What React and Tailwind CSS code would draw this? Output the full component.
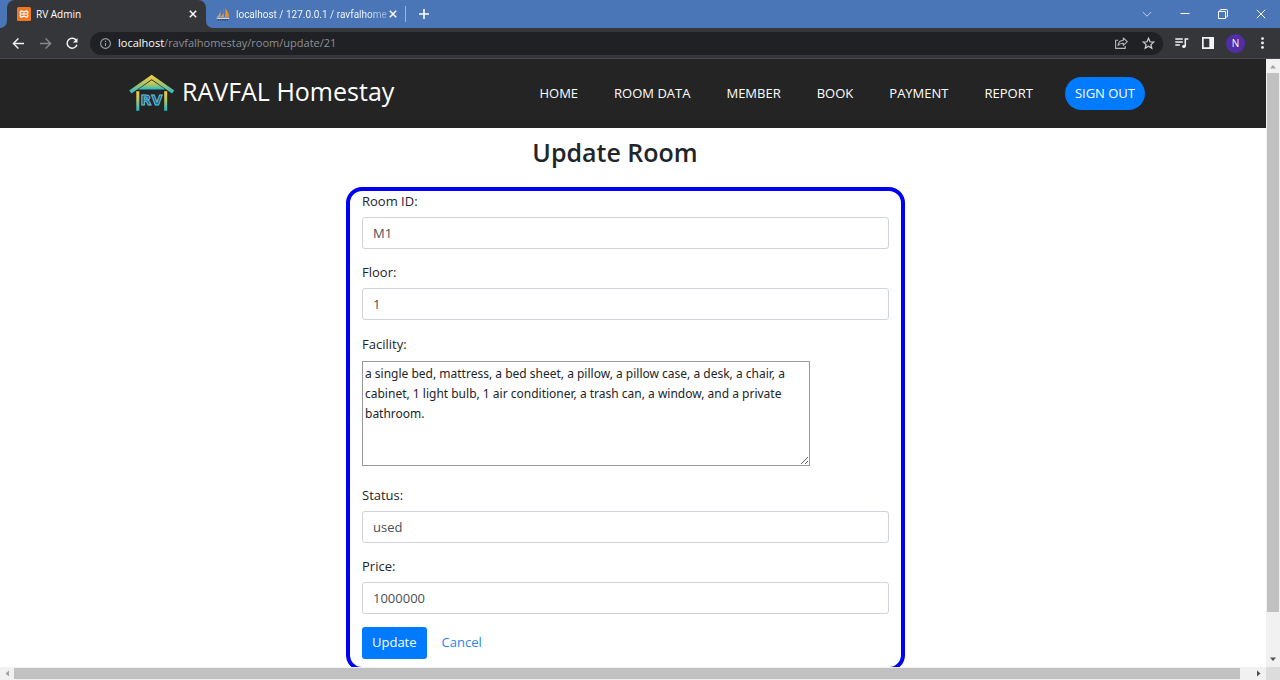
import React from "react";

function XamppIcon() {
  return (
    <svg className="size-3.5 shrink-0" viewBox="0 0 14 14" aria-hidden="true">
      <rect width="14" height="14" rx="1.5" fill="#f37623" />
      <path
        d="M4.600 3.900a1.500 1.500 0 0 0-1 2.500L4.200 7l-.6.6a1.500 1.500 0 0 0 1 2.500c1.200 0 1.300-1 2.400-1s1.200 1 2.400 1a1.500 1.500 0 0 0 1-2.500L9.800 7l.6-.6a1.500 1.500 0 0 0-1-2.500C8.200 3.900 8.100 4.900 7 4.900S5.800 3.900 4.600 3.900ZM5.300 7h3.400"
        fill="none"
        stroke="#fff"
        strokeWidth="1.3"
        strokeLinejoin="round"
      />
    </svg>
  );
}

function SailIcon() {
  return (
    <svg className="size-3.5 shrink-0" viewBox="0 0 14 14" aria-hidden="true">
      <path d="M4.6 2.5C4.5 5.5 3 8.3.6 10.2l3.9-.2Z" fill="#b7a48c" />
      <path d="M6.8.5C8.100 4 7.500 7.300 4.900 10.100h3Z" fill="#f5a02c" />
      <path d="M9 1c2.500 2.200 3.800 5.400 4 8.700l-4.200.4C9.600 7 9.700 4 9 1Z" fill="#f28c1b" />
      <path d="M.8 11.300h12.400" stroke="#dfe3ea" strokeWidth="1.2" />
      <path d="M1.500 12.800h11" stroke="#39415c" strokeWidth="1.4" strokeDasharray="1.5 .8" />
    </svg>
  );
}

function CloseIcon() {
  return (
    <svg className="size-2" viewBox="0 0 8 8" aria-hidden="true">
      <path d="m.8.8 6.400 6.400M7.200.8.8 7.200" stroke="#fff" strokeWidth="1.5" />
    </svg>
  );
}

function TabStrip() {
  return (
    <div className="flex h-7 shrink-0 items-center bg-[#4a76b8] pl-[7px] text-[10px] text-white">
      <div className="relative flex h-full w-[199px] items-center rounded-t-lg bg-[#35363a] pr-[9px] pl-2.5">
        <svg className="absolute bottom-0 -left-[7px] h-[7px] w-[7px]" viewBox="0 0 7 7" aria-hidden="true">
          <path d="M7 0v7H0a7 7 0 0 0 7-7Z" fill="#35363a" />
        </svg>
        <svg className="absolute -right-[7px] bottom-0 h-[7px] w-[7px]" viewBox="0 0 7 7" aria-hidden="true">
          <path d="M0 0v7h7a7 7 0 0 1-7-7Z" fill="#35363a" />
        </svg>
        <XamppIcon />
        <span className="ml-[5px] flex-1">RV Admin</span>
        <button type="button" aria-label="Close RV Admin"><CloseIcon /></button>
      </div>
      <div className="flex h-full w-[199px] items-center pr-2 pl-2.5">
        <SailIcon />
        <span className="ml-1.5 flex-1 bg-linear-to-r from-white from-85% to-white/30 bg-clip-text font-['Roboto',sans-serif] whitespace-nowrap text-transparent">
          localhost / 127.0.0.1 / ravfalhome
        </span>
        <button type="button" aria-label="Close phpMyAdmin"><CloseIcon /></button>
      </div>
      <div className="h-4 w-px bg-[#9db8df]" />
      <button type="button" aria-label="New tab" className="ml-[13px]">
        <svg className="size-2.5" viewBox="0 0 10 10" aria-hidden="true">
          <path d="M5 0v10M0 5h10" stroke="#fff" strokeWidth="1.6" />
        </svg>
      </button>
      <div className="ml-auto flex items-center gap-7 pr-3.5">
        <button type="button" aria-label="Search tabs">
          <svg className="size-2.5" viewBox="0 0 10 10" fill="none" stroke="#c3d3ea" aria-hidden="true">
            <path d="m.8 3 4.200 4.200L9.200 3" />
          </svg>
        </button>
        <button type="button" aria-label="Minimize">
          <svg className="size-2.5" viewBox="0 0 10 10" stroke="#fff" aria-hidden="true"><path d="M.5 4.500h9" /></svg>
        </button>
        <button type="button" aria-label="Restore">
          <svg className="size-2.5" viewBox="0 0 10 10" fill="none" stroke="#fff" aria-hidden="true">
            <path d="M.5 2.500h7v7h-7zM2 2.500V1.500Q2 .5 3 .5h5.500q1 0 1 1V7q0 1-1 1h-1" />
          </svg>
        </button>
        <button type="button" aria-label="Close window">
          <svg className="size-2.5" viewBox="0 0 10 10" stroke="#fff" aria-hidden="true"><path d="m.8.8 8.400 8.400M9.200.8.8 9.200" /></svg>
        </button>
      </div>
    </div>
  );
}

function Toolbar() {
  return (
    <div className="flex h-[31px] shrink-0 items-center border-b border-[#4a4b4e] bg-[#35363a] pr-4 pl-3">
      <div className="flex items-center gap-3.5">
        <button type="button" aria-label="Back">
          <svg className="size-[13px]" viewBox="0 0 13 13" fill="none" stroke="#f1f3f4" strokeWidth="1.4" aria-hidden="true">
            <path d="M12 6.500H1.500M6.400 1.500l-5 5 5 5" />
          </svg>
        </button>
        <button type="button" aria-label="Forward">
          <svg className="size-[13px]" viewBox="0 0 13 13" fill="none" stroke="#86888a" strokeWidth="1.4" aria-hidden="true">
            <path d="M1 6.500h10.500M6.600 1.500l5 5-5 5" />
          </svg>
        </button>
        <button type="button" aria-label="Reload">
          <svg className="size-[13px]" viewBox="0 0 13 13" fill="none" stroke="#f1f3f4" strokeWidth="1.5" aria-hidden="true">
            <path d="M10.400 3.600A5 5 0 1 0 10.900 7.700" />
            <path d="M11.500 1v4.600H6.900Z" fill="#f1f3f4" stroke="none" />
          </svg>
        </button>
      </div>
      <div className="ml-[11px] flex h-[23px] flex-1 items-center rounded-full bg-[#202124] pr-2 pl-2.5">
        <svg className="size-[11px]" viewBox="0 0 11 11" fill="none" stroke="#9aa0a6" strokeWidth="1.1" aria-hidden="true">
          <circle cx="5.500" cy="5.500" r="4.900" />
          <path d="M5.500 5v3M5.500 2.800v1.200" />
        </svg>
        <div className="ml-[7px] flex-1 text-[11px] text-[#8d9094]">
          <span className="text-white">localhost</span>/ravfalhomestay/room/update/21
        </div>
        <button type="button" aria-label="Share">
          <svg className="h-3 w-[13px]" viewBox="0 0 13 12" fill="none" stroke="#b4b6b9" strokeWidth="1.1" strokeLinejoin="round" aria-hidden="true">
            <path d="M3.200 3.200H.6v8.200h9.600V9" />
            <path d="M8.300 1v2.300C5 3.500 3.400 5.500 3 8.500c1.300-1.700 3-2.400 5.300-2.300v2.200L12.300 4.700Z" />
          </svg>
        </button>
        <button type="button" aria-label="Bookmark" className="ml-3.5">
          <svg className="size-[13px]" viewBox="0 0 13 13" fill="none" stroke="#d2d4d6" strokeWidth="1.2" aria-hidden="true">
            <path d="m6.500 1.300 1.500 3.500 3.800.3-2.900 2.500.9 3.700-3.300-2-3.300 2 .9-3.700L1.200 5.100 5 4.800Z" />
          </svg>
        </button>
      </div>
      <div className="ml-3 flex items-center">
        <button type="button" aria-label="Media controls">
          <svg className="h-3 w-3.5" viewBox="0 0 14 12" fill="none" stroke="#f1f3f4" strokeWidth="1.5" aria-hidden="true">
            <path d="M.3 2h7.500M.3 5h7.500M.3 8h4.500M10.300 9.500V2h3" />
            <circle cx="8.900" cy="9.400" r="1.700" fill="#f1f3f4" stroke="none" />
          </svg>
        </button>
        <button type="button" aria-label="Side panel" className="ml-[13px]">
          <svg className="size-3" viewBox="0 0 12 12" aria-hidden="true">
            <path d="M0 0h12v12H0ZM1.700 1.700v8.600h5.600V1.700Z" fill="#f1f3f4" fillRule="evenodd" />
          </svg>
        </button>
        <button type="button" aria-label="Profile" className="ml-3 flex size-[19px] items-center justify-center rounded-full bg-[#512da8] text-[10px] text-white">
          N
        </button>
        <button type="button" aria-label="Menu" className="ml-4">
          <svg className="h-3 w-[3px]" viewBox="0 0 3 12" fill="#f1f3f4" aria-hidden="true">
            <circle cx="1.500" cy="1.600" r="1.400" /><circle cx="1.500" cy="6" r="1.400" /><circle cx="1.500" cy="10.400" r="1.400" />
          </svg>
        </button>
      </div>
    </div>
  );
}

function HouseLogo() {
  return (
    <svg className="h-[38px] w-[46px]" viewBox="0 0 46 38" aria-hidden="true">
      <defs>
        <linearGradient id="roof" x1="0" y1="0" x2="0" y2="1">
          <stop offset="0" stopColor="#fbcb3d" />
          <stop offset=".5" stopColor="#a5c66a" />
          <stop offset="1" stopColor="#22b9cf" />
        </linearGradient>
      </defs>
      <path d="M22.700.8 45.300 16.500 43 19.600 22.700 5.300 2.500 19.600.2 16.500Z" fill="url(#roof)" />
      <path d="M22.700 6.300 36.500 15.500h-27.600Z" fill="url(#roof)" />
      <path d="M7.300 17.300h3v19.500H7.300ZM35.200 17.300h3v19.500h-3Z" fill="url(#roof)" />
      <g fontFamily="DejaVu Sans, sans-serif" fontWeight="700" fontSize="14" fill="#2b5567" stroke="#5ec3e6">
        <text x="11.500" y="31">R</text>
        <text x="22.500" y="31">V</text>
      </g>
    </svg>
  );
}

const links = ["HOME", "ROOM DATA", "MEMBER", "BOOK", "PAYMENT", "REPORT"];

function Navbar() {
  return (
    <header className="flex h-[69px] items-center justify-between bg-[#242424] pr-[121px] pl-[129px] text-white">
      <a href="#home" className="flex items-center gap-[7px] pb-0.5 text-[25px]">
        <HouseLogo />
        <span className="pb-0.5">RAVFAL Homestay</span>
      </a>
      <nav className="flex items-center gap-8 text-[13px] whitespace-nowrap">
        <div className="flex gap-9">
          {links.map((name) => (
            <a key={name} href={"#" + name.toLowerCase().replace(" ", "-")}>{name}</a>
          ))}
        </div>
        <a href="#signout" className="flex h-[33px] items-center rounded-full bg-[#007bff] px-2.5">SIGN OUT</a>
      </nav>
    </header>
  );
}

function Field({ id, label, value }) {
  return (
    <div className="mb-[13px] flex flex-col">
      <label htmlFor={id} className="mb-1.5 leading-5">{label}</label>
      <input
        id={id}
        defaultValue={value}
        className="h-8 rounded-[3px] border border-[#ced4da] bg-white px-2.5 text-[#495057]"
      />
    </div>
  );
}

function RoomForm() {
  return (
    <form className="mx-auto w-[559px] rounded-2xl border-4 border-[#0000f5] px-3 pb-2 text-[13px]" onSubmit={(e) => e.preventDefault()}>
      <Field id="room" label="Room ID:" value="M1" />
      <Field id="floor" label="Floor:" value="1" />
      <div className="mt-3.5 mb-[19px] flex flex-col items-start">
        <label htmlFor="facility" className="mb-[7px] leading-5">Facility:</label>
        <textarea
          id="facility"
          className="h-[105px] w-[448px] border border-[#999] p-0.5 font-['Noto_Sans','Open_Sans',sans-serif] text-xs leading-5"
          defaultValue="a single bed, mattress, a bed sheet, a pillow, a pillow case, a desk, a chair, a cabinet, 1 light bulb, 1 air conditioner, a trash can, a window, and a private bathroom."
        />
      </div>
      <Field id="status" label="Status:" value="used" />
      <Field id="price" label="Price:" value="1000000" />
      <div className="flex items-center">
        <button type="submit" className="h-8 rounded-[3px] bg-[#007bff] px-2.5 text-white">Update</button>
        <a href="#rooms" className="ml-[15px] text-[#2b84ea]">Cancel</a>
      </div>
    </form>
  );
}

function VerticalScrollbar() {
  return (
    <div className="flex w-3.5 shrink-0 flex-col items-center bg-[#f1f1f1]" aria-hidden="true">
      <svg className="h-3.5 w-3.5 shrink-0" viewBox="0 0 14 14"><path d="m7 6 3 3.500H4Z" fill="#a3a3a3" /></svg>
      <div className="w-3 grow-[539] bg-[#c1c1c1]" />
      <div className="grow-[41]" />
      <svg className="h-3.5 w-3.5 shrink-0" viewBox="0 0 14 14"><path d="M4 4.500h6L7 8Z" fill="#505050" /></svg>
    </div>
  );
}

function HorizontalScrollbar() {
  return (
    <div className="flex h-[13px] shrink-0 items-center bg-[#f1f1f1]" aria-hidden="true">
      <svg className="h-[13px] w-3.5 shrink-0" viewBox="0 0 14 13"><path d="M9 3.500v6L5.500 6.500Z" fill="#a3a3a3" /></svg>
      <div className="h-[11px] grow-[1226] bg-[#c1c1c1]" />
      <div className="grow-[12]" />
      <svg className="h-[13px] w-3.5 shrink-0" viewBox="0 0 14 13"><path d="M5 3.500v6l3.500-3Z" fill="#505050" /></svg>
      <div className="h-full w-3.5 shrink-0 bg-[#dcdcdc]" />
    </div>
  );
}

export default function App() {
  return (
    <div className="flex h-screen flex-col overflow-hidden bg-white font-['Open_Sans','Noto_Sans',sans-serif] text-[#212529]">
      <TabStrip />
      <Toolbar />
      <div className="flex min-h-0 flex-1">
        <div className="min-w-0 flex-1 overflow-hidden">
          <Navbar />
          <main>
            <h1 className="pt-2 pb-[19px] pr-9 text-center text-[25px] leading-8 font-semibold">Update Room</h1>
            <div className="pr-[15px]">
              <RoomForm />
            </div>
          </main>
        </div>
        <VerticalScrollbar />
      </div>
      <HorizontalScrollbar />
    </div>
  );
}
